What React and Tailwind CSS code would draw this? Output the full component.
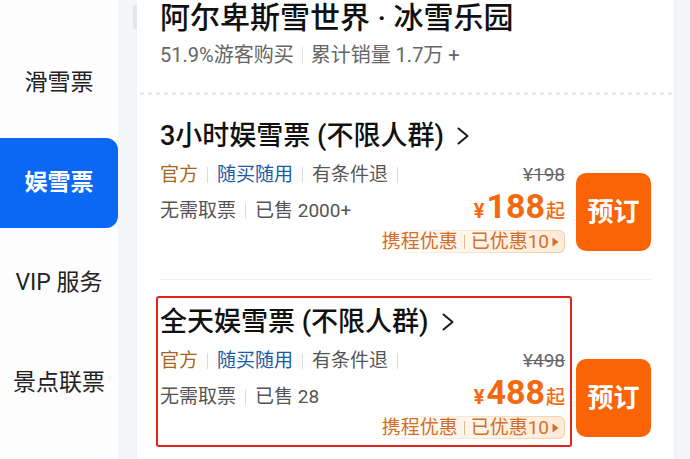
import React from "react";

function Sep({ h = "h-[16px]", color = "bg-[#dcdcdc]", mx = "mx-[9px]" }) {
  return <span className={`inline-block shrink-0 w-px ${h} ${color} ${mx}`} />;
}

function Chevron() {
  return (
    <svg width="14" height="20" viewBox="0 0 14 20" className="ml-[12px] shrink-0">
      <path d="M2.5 2.5 L11.5 10 L2.5 17.5" fill="none" stroke="#1a1a1a" strokeWidth="2" strokeLinecap="round" strokeLinejoin="round" />
    </svg>
  );
}

function Pill() {
  return (
    <div className="rounded-[6px] p-px bg-[linear-gradient(to_right,rgba(245,215,185,0),#f2cfa8)]">
      <div className="h-[21px] rounded-[5px] bg-[linear-gradient(to_right,#ffffff,#fdebd8)] flex items-center whitespace-nowrap pl-[14px] pr-[5px] text-[19px] leading-[21px] text-[#d2702a]">
        <span>携程优惠</span>
        <Sep h="h-[14px]" color="bg-[#e6b98e]" mx="mx-[6px]" />
        <span>已优惠10</span>
        <svg width="7" height="10" viewBox="0 0 7 10" className="ml-[3px] shrink-0">
          <path d="M0.5 0.5 L6.5 5 L0.5 9.5 Z" fill="#d2702a" />
        </svg>
      </div>
    </div>
  );
}

function Ticket({ name, old, price, sold, selected }) {
  return (
    <div className="flex gap-[4px]">
      <div
        className={`flex-1 min-w-0 border-2 rounded-[3px] pl-[2px] pr-[5px] pt-[8px] pb-[6px] ${
          selected ? "border-[#e1231e]" : "border-transparent"
        }`}
      >
        <div className="text-[27px] leading-[32px] font-medium text-[#111] flex items-center whitespace-nowrap">
          {name}
          <Chevron />
        </div>
        <div className="mt-[10px] flex items-center justify-between whitespace-nowrap">
          <div className="flex items-center text-[19px] leading-[26px] text-[#555]">
            <span className="text-[#a4661e]">官方</span>
            <Sep />
            <span className="text-[#185aa6]">随买随用</span>
            <Sep />
            <span>有条件退</span>
            <Sep />
          </div>
          <div className="text-[19px] leading-[26px] text-[#666] line-through">¥{old}</div>
        </div>
        <div className="h-[36px] flex items-end justify-between whitespace-nowrap">
          <div className="flex items-center text-[19px] leading-[26px] text-[#555]">
            <span>无需取票</span>
            <Sep />
            <span>已售 {sold}</span>
          </div>
          <div className="h-[36px] flex items-baseline text-[#f2690f]">
            <span className="text-[20px] font-bold mr-[2px]">¥</span>
            <span className="text-[34px] leading-[36px] font-bold">{price}</span>
            <span className="text-[19px] font-medium ml-[1px]">起</span>
          </div>
        </div>
        <div className="mt-[6px] flex justify-end">
          <Pill />
        </div>
      </div>
      <button className="mt-[63px] shrink-0 w-[75px] h-[78px] rounded-[10px] bg-[#fa6406] text-white text-[26px] font-semibold flex items-center justify-center">
        预订
      </button>
    </div>
  );
}

export default function App() {
  const items = ["滑雪票", "娱雪票", "VIP 服务", "景点联票"];
  return (
    <div className="w-[690px] h-[459px] overflow-hidden flex bg-[#f3f6f9] font-['Roboto','Noto_Sans_CJK_SC',sans-serif]">
      <div className="w-[118px] shrink-0 bg-[#fdfdfe] flex flex-col pt-[38px] gap-[10px]">
        {items.map((it, i) => (
          <div
            key={it}
            className={`h-[90px] flex items-center justify-center text-[23px] ${
              i === 1 ? "bg-[#0a68f5] text-white font-semibold rounded-r-[12px]" : "text-[#222]"
            }`}
          >
            {it}
          </div>
        ))}
      </div>
      <div className="w-[19px] shrink-0 flex justify-end">
        <div className="mt-[5px] w-[4px] h-[25px] rounded-l-[3px] bg-[#e2e7ed]" />
      </div>
      <div className="w-[537px] shrink-0 bg-white pl-[19px] pr-[23px] flex flex-col">
        <div className="pl-[4px]">
          <div className="text-[30px] leading-[36px] font-medium text-[#111] whitespace-nowrap">阿尔卑斯雪世界 · 冰雪乐园</div>
          <div className="mt-[6px] text-[20px] leading-[26px] text-[#666] flex items-center whitespace-nowrap">
            <span>51.9%游客购买</span>
            <Sep h="h-[17px]" color="bg-[#dedede]" mx="mx-[8px]" />
            <span>累计销量 1.7万 +</span>
          </div>
        </div>
        <div className="mt-[24px] -ml-[16px] -mr-[23px] h-[3px] bg-[linear-gradient(to_right,#e6e9ed_50%,transparent_50%)] bg-[length:8px_3px]" />
        <div className="mt-[15px] pb-[18px]">
          <Ticket name="3小时娱雪票 (不限人群)" old="198" price="188" sold="2000+" />
        </div>
        <div className="ml-[4px] h-px bg-[#eef0f2]" />
        <div className="pt-[16px]">
          <Ticket name="全天娱雪票 (不限人群)" old="498" price="488" sold="28" selected />
        </div>
      </div>
      <div className="w-[16px] shrink-0 bg-[#f3f6f9] border-l border-[#eceff3]" />
    </div>
  );
}
